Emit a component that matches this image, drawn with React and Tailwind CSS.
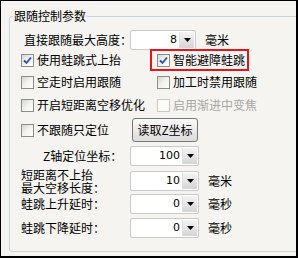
import React from 'react';

const Check = ({ checked, disabled }) => (
  <span
    className={`inline-flex w-[13px] h-[13px] shrink-0 items-center justify-center border ${
      disabled
        ? 'border-[#c9c9c4] bg-[#fbfbfa]'
        : 'border-[#8c8d8d] bg-gradient-to-br from-[#d6d6d2] via-[#f2f2ef] to-white'
    }`}
  >
    {checked && (
      <svg width="9" height="9" viewBox="0 0 9 9">
        <path d="M1 4.5 L3.5 7 L8 1.5" fill="none" stroke="#2f4db8" strokeWidth="1.8" />
      </svg>
    )}
  </span>
);

const CheckLabel = ({ label, checked, disabled }) => (
  <div className="flex items-center gap-[3px] whitespace-nowrap">
    <Check checked={checked} disabled={disabled} />
    <span className={disabled ? 'text-[#a6a6a6]' : 'text-black'}>{label}</span>
  </div>
);

const Combo = ({ value, w }) => (
  <div className={`flex h-full shrink-0 ${w} border border-[#c9c9c9] bg-white rounded-[2px]`}>
    <span className="flex-1 text-right pr-[2px] leading-[18px] font-['DejaVu_Sans',sans-serif] text-[11px]">
      {value}
    </span>
    <span className="w-[15px] my-[1px] mr-[1px] flex items-center justify-center bg-gradient-to-b from-[#f4f4f4] to-[#d5d5d5] border-l border-[#e0e0e0]">
      <svg width="7" height="4" viewBox="0 0 7 4">
        <path d="M0 0 H7 L3.5 4 Z" fill="#000" />
      </svg>
    </span>
  </div>
);

export default function App() {
  return (
    <div className="w-[298px] h-[258px] overflow-hidden bg-[#f5f4f0] border-l border-t border-black border-r-2 border-b-2 font-['Noto_Sans_CJK_SC',sans-serif] text-[12px] text-black leading-[16px] whitespace-nowrap">
      <fieldset className="ml-[8px] mt-[7px] w-[300px] h-[244px] border border-[#c8d5e2] rounded-[3px] px-0 pb-0 pt-0 m-0">
        <legend className="ml-[3px] px-[1px] leading-[16px]">跟随控制参数</legend>

        <div className="flex items-center h-[20px] mt-[6px]">
          <div className="w-[120px] shrink-0 pl-[14px]">直接跟随最大高度：</div>
          <Combo value="8" w="w-[66px]" />
          <span className="ml-[9px]">毫米</span>
        </div>

        <div className="flex items-center h-[20px]">
          <div className="w-[140px] shrink-0 pl-[11px]">
            <CheckLabel label="使用蛙跳式上抬" checked />
          </div>
          <div className="h-[22px] w-[99px] shrink-0 border-2 border-[#e8141a] pl-[5px] flex items-center">
            <CheckLabel label="智能避障蛙跳" checked />
          </div>
        </div>

        <div className="flex items-center h-[20px] mt-[2px]">
          <div className="w-[147px] shrink-0 pl-[11px]">
            <CheckLabel label="空走时启用跟随" />
          </div>
          <CheckLabel label="加工时禁用跟随" />
        </div>

        <div className="flex items-center h-[20px] mt-[3px]">
          <div className="w-[147px] shrink-0 pl-[11px]">
            <CheckLabel label="开启短距离空移优化" />
          </div>
          <CheckLabel label="启用渐进中变焦" disabled />
        </div>

        <div className="flex items-center h-[24px] mt-[3px]">
          <div className="w-[122px] shrink-0 pl-[11px]">
            <CheckLabel label="不跟随只定位" />
          </div>
          <button className="h-[24px] w-[66px] shrink-0 border border-[#767676] rounded-[3px] bg-gradient-to-b from-[#fafafa] to-[#dcdcdc] text-[12px] leading-[16px]">
            读取Z坐标
          </button>
        </div>

        <div className="flex items-center h-[20px] mt-[4px]">
          <div className="w-[120px] shrink-0 pl-[33px]">Z轴定位坐标：</div>
          <Combo value="100" w="w-[69px]" />
        </div>

        <div className="flex items-center h-[20px] mt-[5px]">
          <div className="w-[120px] shrink-0 pl-[11px] leading-[13px] -mt-[1px]">
            <div>短距离不上抬</div>
            <div>最大空移长度：</div>
          </div>
          <Combo value="10" w="w-[69px]" />
          <span className="ml-[9px]">毫米</span>
        </div>

        <div className="flex items-center h-[20px] mt-[3px]">
          <div className="w-[120px] shrink-0 pl-[11px]">蛙跳上升延时：</div>
          <Combo value="0" w="w-[69px]" />
          <span className="ml-[9px]">毫秒</span>
        </div>

        <div className="flex items-center h-[20px] mt-[4px]">
          <div className="w-[120px] shrink-0 pl-[11px]">蛙跳下降延时：</div>
          <Combo value="0" w="w-[69px]" />
          <span className="ml-[9px]">毫秒</span>
        </div>
      </fieldset>
    </div>
  );
}
